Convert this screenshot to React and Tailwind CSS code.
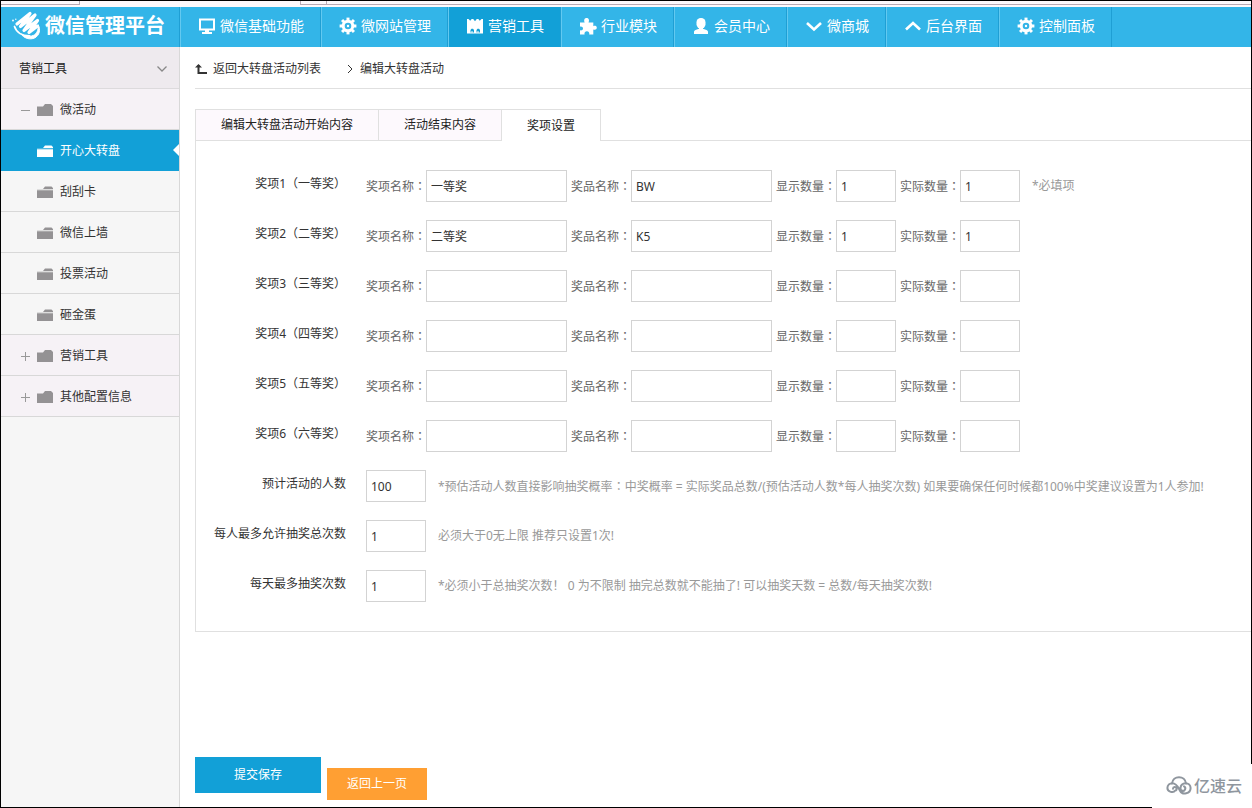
import { useState } from "react";
import clsx from "clsx";

const TEETH = [0, 45, 90, 135, 180, 225, 270, 315];

function GearIcon() {
  return (
    <svg className="w-[18px] h-[18px]" viewBox="0 0 18 18" fill="none" stroke="currentColor">
      <circle cx="9" cy="9" r="4.8" strokeWidth="3" />
      {TEETH.map((a) => <path key={a} d="M9 4V.6" strokeWidth="3" transform={`rotate(${a} 9 9)`} />)}
      <circle cx="9" cy="9" r="1.2" fill="currentColor" stroke="none" />
    </svg>
  );
}

function MonitorIcon() {
  return (
    <svg className="w-[18px] h-[18px]" viewBox="0 0 18 18" fill="currentColor">
      <path fillRule="evenodd" d="M1 1.500h16v12H1zM3 3.500v8h12v-8z" />
      <path d="M7 13h4v2h3v2H4v-2h3z" />
    </svg>
  );
}

function CastleIcon() {
  return (
    <svg className="w-[18px] h-[18px]" viewBox="0 0 18 18" fill="currentColor">
      <path fillRule="evenodd" d="M1 2h1.500l1.700 1.800L5.700 2h1.500L9 4.300 10.800 2h1.500l1.500 1.800L15.500 2H17v14.500H1zM4.500 13v2.500h1V14h1v1.500H8V13l-1-1.200H5.500zM10.500 13v2.500h1V14h1v1.500H14V13l-1-1.200h-1.500z" />
    </svg>
  );
}

function PuzzleIcon() {
  return (
    <svg className="w-[18px] h-[18px]" viewBox="0 0 18 18" fill="currentColor">
      <path d="M1 5.500h4.700C4.600 3.300 5.300 1 7.600 1s3 2.300 1.900 4.500h4.800v3.700c1.500-.8 3.500-.3 3.500 1.600s-2 2.400-3.500 1.600V17.500h-4.100c.6-1.800-.6-3.300-2.300-3.300s-2.900 1.500-2.300 3.300H1v-4.200c1.700.4 3-.4 3-1.800s-1.300-2.300-3-1.800z" />
    </svg>
  );
}

function UserIcon() {
  return (
    <svg className="w-[18px] h-[18px]" viewBox="0 0 18 18" fill="currentColor">
      <rect x="4.500" y="1" width="9" height="10.500" rx="4.200" />
      <path d="M7 10h4v1.800l3.500 1.200c1.200.5 1.500 1.200 1.500 2v2H2v-2c0-.8.300-1.500 1.500-2L7 11.800z" />
    </svg>
  );
}

function Chevron({ up }) {
  return (
    <svg className="w-[18px] h-[18px]" viewBox="0 0 18 18" fill="none" stroke="currentColor" strokeWidth="2.600">
      <path d={up ? "M2 12.500l7-6.500 7 6.500" : "M2 6l7 6.500L16 6"} />
    </svg>
  );
}

function FolderIcon({ open }) {
  return (
    <svg className="w-4 h-3.5" viewBox="0 0 16 14" fill="currentColor">
      {open ? (
        <path d="M0 4h6l2-2.500h6.500L16 3v1.200H0zM0 5.200h16V13H0z" />
      ) : (
        <path d="M0 3.500h6L8 1h6l2 2v10H0z" />
      )}
    </svg>
  );
}

function BrandMark() {
  return (
    <svg className="w-8 h-8 shrink-0" viewBox="0 0 32 32" fill="none" stroke="currentColor" strokeLinecap="round" strokeLinejoin="round">
      <circle cx="2" cy="10.500" r=".9" fill="currentColor" stroke="none" />
      <circle cx="4.800" cy="9.300" r=".7" fill="currentColor" stroke="none" />
      <path d="M6 14L19 3.500 9.500 16.500 24 5 13 20.500 26.500 10.500 18 22.500l8-6" strokeWidth="3.200" />
      <path d="M3.500 16.500c2 6 8 9.500 15 9.500" strokeWidth="1.800" />
      <path d="M10 24c3 4.500 9 6 13.500 4 5-2.500 6.500-8.500 3.500-13.500.8 6-1.500 10.500-6.500 11.500-4 .7-7.500 0-10.500-2z" strokeWidth="1" fill="currentColor" />
    </svg>
  );
}

function CloudMark() {
  return (
    <svg className="w-[26px] h-5" viewBox="0 0 26 20" fill="none" stroke="currentColor" strokeWidth="2" strokeLinecap="round">
      <path d="M6 7.500C6.500 3.500 9.500 1.200 13 1.200s6.500 2.300 7 6.300" />
      <path d="M7 12.800a1.800 1.800 0 1 1 2.200 1.800c-1.600 2.600-7.800 1.600-7.800-2.600 0-3 2.300-4.800 4.900-4.800 4.700 0 6 4.600 8 8 1.900 3.600 10.300 3 10.300-3.200 0-3-2.300-4.800-4.900-4.800-3.500 0-5.200 2.500-5.200 4.800a2.400 2.400 0 1 0 3.500-1.700" />
    </svg>
  );
}

// the TC face centres the full-width colon
function Colon() {
  return <span className="font-['Noto_Sans_CJK_TC',sans-serif]">：</span>;
}

const NAV = [
  { label: "微信基础功能", icon: <MonitorIcon /> },
  { label: "微网站管理", icon: <GearIcon /> },
  { label: "营销工具", icon: <CastleIcon />, active: true },
  { label: "行业模块", icon: <PuzzleIcon /> },
  { label: "会员中心", icon: <UserIcon /> },
  { label: "微商城", icon: <Chevron /> },
  { label: "后台界面", icon: <Chevron up /> },
  { label: "控制面板", icon: <GearIcon /> },
];

const MENU = [
  { id: "activity", label: "微活动", group: true, expanded: true },
  { id: "wheel", label: "开心大转盘", active: true },
  { id: "scratch", label: "刮刮卡" },
  { id: "wall", label: "微信上墙" },
  { id: "vote", label: "投票活动" },
  { id: "egg", label: "砸金蛋" },
  { id: "tools", label: "营销工具", group: true },
  { id: "other", label: "其他配置信息", group: true },
];

const TABS = ["编辑大转盘活动开始内容", "活动结束内容", "奖项设置"];

const PRIZES = [
  { title: "奖项1（一等奖）", name: "一等奖", prize: "BW", shown: "1", actual: "1", note: "*必填项" },
  { title: "奖项2（二等奖）", name: "二等奖", prize: "K5", shown: "1", actual: "1" },
  { title: "奖项3（三等奖）" },
  { title: "奖项4（四等奖）" },
  { title: "奖项5（五等奖）" },
  { title: "奖项6（六等奖）" },
];

const LIMITS = [
  {
    id: "people",
    label: "预计活动的人数",
    value: "100",
    note: <>*预估活动人数直接影响抽奖概率<Colon />中奖概率 = 实际奖品总数/(预估活动人数*每人抽奖次数) 如果要确保任何时候都100%中奖建议设置为1人参加!</>,
  },
  { id: "total", label: "每人最多允许抽奖总次数", value: "1", note: "必须大于0无上限 推荐只设置1次!" },
  { id: "daily", label: "每天最多抽奖次数", value: "1", note: "*必须小于总抽奖次数！ 0 为不限制 抽完总数就不能抽了! 可以抽奖天数 = 总数/每天抽奖次数!" },
];

function TextBox({ id, value = "", wide }) {
  return (
    <input
      id={id}
      type="text"
      defaultValue={value}
      className={clsx("h-8 px-1 border border-[#d3d3d3] bg-white text-[#333] outline-none focus:border-[#12a0d7]", wide ? "w-[141px]" : "w-[60px]")}
    />
  );
}

function Field({ id, label, value, wide }) {
  return (
    <div className="flex items-center shrink-0">
      <label htmlFor={id} className="w-[60px] whitespace-nowrap text-[#666]">
        {label}<Colon />
      </label>
      <TextBox id={id} value={value} wide={wide} />
    </div>
  );
}

function Header() {
  return (
    <header className="flex h-10 bg-[#33b5e8] text-white">
      <h1 className="flex items-center w-[179px] shrink-0 pl-2.5 pb-0.5 border-r border-[#1f9fd4]">
        <BrandMark />
        <span className="ml-0.5 text-[20px] leading-5 font-bold whitespace-nowrap">微信管理平台</span>
      </h1>
      <nav className="flex text-[14px]">
        {NAV.map((item) => (
          <a
            key={item.label}
            href="#"
            className={clsx(
              "flex items-center gap-1 pl-[17px] pr-4 pb-0.5 border-l border-l-[#63c9f0] border-r border-r-[#1f9fd4] whitespace-nowrap",
              item.active && "bg-[#12a0d7]"
            )}
          >
            {item.icon}
            {item.label}
          </a>
        ))}
      </nav>
    </header>
  );
}

function Sidebar() {
  return (
    <aside className="w-[179px] shrink-0 bg-[#f6f6f6] border-r border-[#d8d8d8]">
      <div className="flex items-center justify-between h-[42px] pl-[18px] pr-3 pt-0.5 bg-[#eeeaee] border-b border-[#dcdadc] text-[#222]">
        营销工具
        <svg className="w-2.5 h-1.5" viewBox="0 0 10 6" fill="none" stroke="#888" strokeWidth="1.300"><path d="M.5.5L5 5 9.500.5" /></svg>
      </div>
      <ul>
        {MENU.map((item) => (
          <li key={item.id} className="relative">
            <a
              href="#"
              className={clsx(
                "flex items-center h-[41px] pl-5 pt-0.5 border-b",
                item.active ? "bg-[#12a0d7] border-[#12a0d7] text-white" : "border-[#d8d8d8] text-[#333]",
                item.group && "bg-[#f6f2f6]"
              )}
            >
              <span className="w-4 shrink-0">
                {item.group && (
                  <svg className="w-[9px] h-[9px]" viewBox="0 0 9 9" stroke="#999">
                    <path d={item.expanded ? "M0 4.500h9" : "M0 4.500h9M4.500 0v9"} />
                  </svg>
                )}
              </span>
              <span className={clsx("mr-[7px] shrink-0", !item.active && "text-[#949294]")}><FolderIcon open={!item.group} /></span>
              {item.label}
            </a>
            {item.active && (
              <svg className="absolute right-0 top-3.5 w-1.5 h-3 text-white" viewBox="0 0 6 12" fill="currentColor"><path d="M6 0v12L0 6z" /></svg>
            )}
          </li>
        ))}
      </ul>
    </aside>
  );
}

export default function App() {
  const [tab, setTab] = useState(2);

  return (
    <div className="relative flex flex-col min-h-screen border border-black bg-white text-[12px] leading-[18px] font-['Noto_Sans','Noto_Sans_CJK_SC',sans-serif]">
      <div className="flex h-1.5 bg-[#fdf8fb]">
        <div className="w-[79px] h-1 border-b border-r border-[#b9aab4]" />
        <div className="w-[220px]" />
        <div className="w-[26px] h-1 border-b border-l border-[#b9aab4]" />
        <div className="flex-1 h-1 border-b border-l border-[#b9aab4]" />
      </div>
      <Header />

      <div className="flex flex-1">
        <Sidebar />
        <main className="flex-1 min-w-0 pl-[15px] pb-1.5">
          <div className="flex items-center h-[42px] pt-0.5 border-b border-[#e0e0e0] text-[#333]">
            <a href="#" className="flex items-center gap-1.5">
              <svg className="w-3 h-3" viewBox="0 0 12 12" fill="none" stroke="currentColor">
                <path d="M3.500 2v8H12" strokeWidth="2" />
                <path d="M0 4.500L3.500 1 7 4.500z" fill="currentColor" stroke="none" />
              </svg>
              返回大转盘活动列表
            </a>
            <svg className="w-1.5 h-2.5 ml-[26px] mr-[7px]" viewBox="0 0 6 10" fill="none" stroke="currentColor"><path d="M1 1l4 4-4 4" /></svg>
            <span>编辑大转盘活动</span>
          </div>

          <div role="tablist" className="flex mt-5 h-8 border-l border-[#e0e0e0]">
            {TABS.map((label, i) => (
              <button
                key={label}
                type="button"
                role="tab"
                aria-selected={i === tab}
                onClick={() => setTab(i)}
                className={clsx(
                  "px-[25px] border-t border-r border-[#e0e0e0] text-[#222] cursor-pointer whitespace-nowrap",
                  i === tab ? "bg-white" : "bg-[#fdf9fd] border-b"
                )}
              >
                {label}
              </button>
            ))}
            <div className="flex-1 border-b border-[#e0e0e0]" />
          </div>

          <form>
            <div className="flex flex-col gap-[18px] py-[29px] border-l border-b border-[#e0e0e0]">
              {PRIZES.map((p, i) => (
                <div key={p.title} role="group" aria-label={p.title} className="flex items-center gap-1">
                  <span className="w-[150px] pb-1 mr-4 shrink-0 text-right text-[#333]">{p.title}</span>
                  <Field id={`name-${i}`} label="奖项名称" value={p.name} wide />
                  <Field id={`prize-${i}`} label="奖品名称" value={p.prize} wide />
                  <Field id={`shown-${i}`} label="显示数量" value={p.shown} />
                  <Field id={`actual-${i}`} label="实际数量" value={p.actual} />
                  {p.note && <span className="ml-2 text-[#999] whitespace-nowrap">{p.note}</span>}
                </div>
              ))}
              {LIMITS.map((l) => (
                <div key={l.id} className="flex items-center">
                  <label htmlFor={l.id} className="w-[150px] pb-1 mr-5 shrink-0 text-right text-[#333]">{l.label}</label>
                  <TextBox id={l.id} value={l.value} />
                  <span className="ml-3 text-[#999] whitespace-nowrap">{l.note}</span>
                </div>
              ))}
            </div>

            <div className="flex items-start gap-1.5 mt-[125px]">
              <button type="submit" className="w-[126px] h-9 bg-[#12a0d7] text-white cursor-pointer">提交保存</button>
              <button type="button" className="w-[100px] h-8 mt-[11px] bg-[#ff9f33] text-white cursor-pointer">返回上一页</button>
            </div>
          </form>
        </main>
      </div>

      {/* host badge covers the corner of the frame */}
      <div className="absolute -right-px -bottom-px flex items-center justify-center gap-0.5 w-[100px] h-11 pl-1 bg-white text-[#8f969e] text-[16px] font-medium whitespace-nowrap">
        <CloudMark />
        亿速云
      </div>
    </div>
  );
}
